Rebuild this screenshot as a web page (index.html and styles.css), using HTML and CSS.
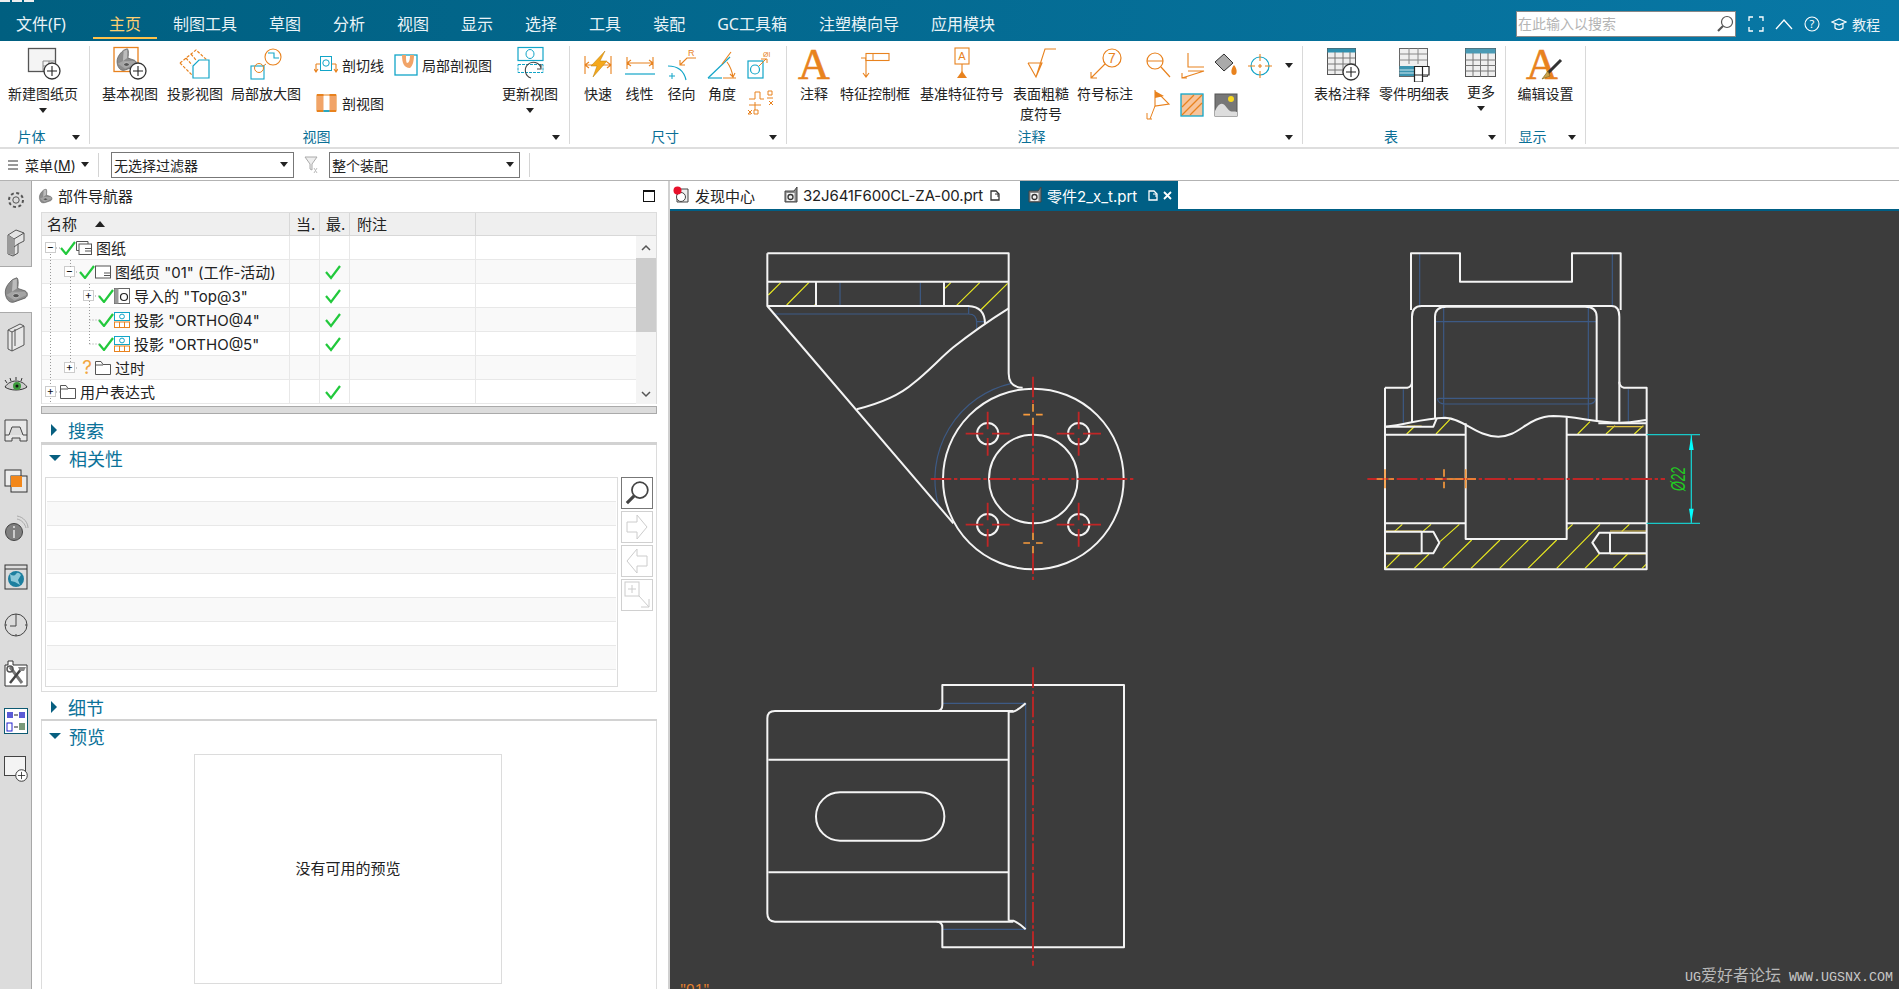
FILE: index.html
```html
<!DOCTYPE html>
<html lang="en">
<head>
	<meta charset="UTF-8">
	<title>NX 制图</title>
	<link rel="stylesheet" href="styles.css">
</head>
<body>
	<svg class="defs">
		<symbol id="i-plus" viewBox="0 0 18 18"><circle cx="9" cy="9" r="8" fill="#fff" stroke="#333" stroke-width="1.3"/><path d="M4 9H14M9 4V14" stroke="#222" stroke-width="1.1"/></symbol>
		<symbol id="i-part" viewBox="0 0 32 32"><path d="M3 21C2 14 6 8 12 3L17 1C19 2 19 8 18 14L27 17C31 19 31 24 27 26L13 31C8 32 4 28 3 21Z" fill="#8c8c8c" stroke="#5a5a5a"/><path d="M12 4L17 2 17 14 11 18Z" fill="#bcbcbc"/><path d="M4 22L11 18 27 18 29 22 14 29Z" fill="#a4a4a4"/><ellipse cx="16" cy="23" rx="4" ry="2.600" fill="#555" stroke="#ccc"/></symbol>
		<symbol id="i-check" viewBox="0 0 16 14"><path d="M1 7L6 13 15 1" fill="none" stroke="#22c93c" stroke-width="2.2"/></symbol>
		<symbol id="i-proj" viewBox="0 0 16 16"><rect x=".5" y=".5" width="15" height="8" fill="#fff" stroke="#12a5c8"/><circle cx="8" cy="4.5" r="2.4" fill="none" stroke="#12a5c8"/><rect x=".5" y="10" width="15" height="5.5" fill="#fff" stroke="#e8821e"/><path d="M5.5 10V15.5M10.5 10V15.5" stroke="#e8821e"/></symbol>
		<symbol id="i-folder" viewBox="0 0 16 16"><path d="M.5 14.5V1.5H6L8 4.500H15.500V14.500Z" fill="#fff" stroke="#555"/><path d="M.5 5H8" stroke="#555"/></symbol>
		<symbol id="i-doc" viewBox="0 0 16 18"><path d="M2 5H11L14 1V16H2Z" fill="#8a8a8a" stroke="#444"/><rect x="3.500" y="7" width="8" height="8" fill="#f2f2f2"/><circle cx="7.500" cy="11" r="2.500" fill="none" stroke="#333" stroke-width="1.300"/></symbol>
		<symbol id="i-lens" viewBox="0 0 18 18"><circle cx="11" cy="7" r="5.500" fill="none" stroke="currentColor" stroke-width="1.200"/><path d="M7 11L2 16" stroke="currentColor" stroke-width="2.200"/></symbol>
		<symbol id="i-detach" viewBox="0 0 10 12"><path d="M1 2H6L9 5V11H1Z" fill="none" stroke="currentColor" stroke-width="1.300"/><path d="M5 5H8V8" fill="none" stroke="currentColor"/></symbol>
	</svg>

	<header class="titlebar">
		<nav class="tabs">
			<span class="file-tab">文件(F)</span>
			<span class="tab active">主页</span>
			<span class="tab">制图工具</span>
			<span class="tab">草图</span>
			<span class="tab">分析</span>
			<span class="tab">视图</span>
			<span class="tab">显示</span>
			<span class="tab">选择</span>
			<span class="tab">工具</span>
			<span class="tab">装配</span>
			<span class="tab">GC工具箱</span>
			<span class="tab">注塑模向导</span>
			<span class="tab">应用模块</span>
		</nav>
		<div class="title-right">
			<div class="search"><span>在此输入以搜索</span><svg width="18" height="18" class="search-lens"><use href="#i-lens"/></svg></div>
			<svg class="tr-ico" width="16" height="16" viewBox="0 0 16 16"><path d="M1 5V1H5M11 1H15V5M15 11V15H11M5 15H1V11" fill="none" stroke="#fff" stroke-width="1.300"/></svg>
			<svg class="tr-ico" width="18" height="16" viewBox="0 0 18 16"><path d="M1 13L9 4 17 13" fill="none" stroke="#fff" stroke-width="1.300"/></svg>
			<svg class="tr-ico" width="16" height="16" viewBox="0 0 16 16"><circle cx="8" cy="8" r="7" fill="none" stroke="#fff" stroke-width="1.100"/><text x="8" y="12" font-size="11" text-anchor="middle" fill="#fff">?</text></svg>
			<svg class="tr-ico" width="16" height="14" viewBox="0 0 16 14"><path d="M1 5L8 2 15 5 8 8ZM4 7V11C6 13 10 13 12 11V7" fill="none" stroke="#fff" stroke-width="1.200"/></svg>
			<span class="tutorial">教程</span>
		</div>
	</header>

	<section class="ribbon">
		<div class="group g-sheet">
			<div class="group-body">
				<div class="btn">
					<svg class="ico" width="36" height="36" viewBox="0 0 36 36"><rect x="3.500" y="2.500" width="27" height="23" fill="#f4f4f4" stroke="#555" stroke-width="1.300"/><path d="M18 15H30M18 20H30M18 15V25M24 15V25" stroke="#888"/><use href="#i-plus" x="18" y="16" width="18" height="18"/></svg>
					<span>新建图纸页</span><i class="caret"></i>
				</div>
			</div>
			<div class="group-foot"><span>片体</span><i class="caret"></i></div>
		</div>

		<div class="group g-view">
			<div class="group-body">
				<div class="btn">
					<svg class="ico" width="36" height="36" viewBox="0 0 36 36"><rect x="2" y="1.500" width="24" height="24" fill="#fff" stroke="#e8821e" stroke-width="1.300"/><use href="#i-part" x="3" y="2" width="23" height="23"/><use href="#i-plus" x="17" y="16" width="18" height="18"/></svg>
					<span>基本视图</span>
				</div>
				<div class="btn">
					<svg class="ico" width="32" height="32" viewBox="0 0 32 32"><path d="M1 15L17 2 29 13M1 15L14 28M7 10L13 17M12 6L17 12" fill="none" stroke="#e8821e" stroke-width="1.200" stroke-dasharray="3 1.500"/><path d="M14 30V18L20 12H30V30Z" fill="#fff" stroke="#12a5c8" stroke-width="1.200"/></svg>
					<span>投影视图</span>
				</div>
				<div class="btn">
					<svg class="ico" width="32" height="32" viewBox="0 0 32 32"><circle cx="23" cy="9" r="8" fill="#fff" stroke="#e8821e" stroke-width="1.100"/><path d="M18 5H24V10H29" fill="none" stroke="#12a5c8" stroke-width="1.100"/><path d="M16 16L12 19" stroke="#e8821e"/><rect x="1" y="18" width="13" height="13" fill="#fff" stroke="#12a5c8" stroke-width="1.100"/><circle cx="9" cy="20" r="4.500" fill="none" stroke="#e8821e"/></svg>
					<span>局部放大图</span>
				</div>
				<div class="tools">
					<div class="tool-row">
						<div class="tool">
							<svg width="24" height="20" viewBox="0 0 24 20"><path d="M2 9V16M22 9V16M2 9H6M18 9H22M0 14L2 17 4 14M20 14L22 17 24 14" fill="none" stroke="#e8821e" stroke-width="1.100"/><rect x="6.500" y="1.500" width="11" height="14" fill="#fff" stroke="#12a5c8"/><circle cx="12" cy="8" r="3.200" fill="none" stroke="#12a5c8"/></svg>
							<span>剖切线</span>
						</div>
						<div class="tool tool-right">
							<svg width="24" height="22" viewBox="0 0 24 22"><rect x="1" y="1" width="22" height="20" fill="#fff" stroke="#12a5c8" stroke-width="1.300"/><path d="M8 1C8 9 10 14 16 14C19 12 20 6 20 1H16C16 6 15 9 13 9C12 8 12 4 12 1Z" fill="#f1a468"/></svg>
							<span>局部剖视图</span>
						</div>
					</div>
					<div class="tool-row">
						<div class="tool">
							<svg width="24" height="20" viewBox="0 0 24 20"><rect x="3" y="2" width="19" height="16" fill="#fff" stroke="#e8821e"/><rect x="3" y="2" width="6.500" height="16" fill="#f1a468"/><rect x="15.500" y="2" width="6.500" height="16" fill="#f1a468"/><path d="M3 2H9.500M15.500 2H22M3 18H9.500M15.500 18H22" stroke="#e8821e" stroke-width="1.800"/><path d="M9.500 18H15.500" stroke="#12a5c8" stroke-width="1.800"/></svg>
							<span>剖视图</span>
						</div>
					</div>
				</div>
				<div class="btn">
					<svg class="ico" width="32" height="36" viewBox="0 0 32 36"><rect x="4" y="1.500" width="25" height="13" fill="#fff" stroke="#12a5c8" stroke-width="1.200"/><ellipse cx="16" cy="8" rx="4" ry="4.500" fill="none" stroke="#12a5c8"/><rect x="4" y="18.500" width="25" height="8" fill="#fff" stroke="#12a5c8" stroke-dasharray="3 1"/><path d="M17 32A8 8 0 1 1 27 22M27 18V23H23" fill="none" stroke="#444" stroke-width="1.100"/></svg>
					<span>更新视图</span><i class="caret"></i>
				</div>
			</div>
			<div class="group-foot"><span>视图</span><i class="caret"></i></div>
		</div>

		<div class="group g-dim">
			<div class="group-body">
				<div class="btn">
					<svg class="ico" width="30" height="32" viewBox="0 0 30 32"><path d="M2 8V26M28 8V26M2 17H28M6 14L2 17 6 20M24 14L28 17 24 20" fill="none" stroke="#e8821e" stroke-width="1.100"/><path d="M22 3L8 18H14L10 29 24 13H17Z" fill="#f5a81c" stroke="#b87a00" stroke-width=".5"/></svg>
					<span>快速</span>
				</div>
				<div class="btn">
					<svg class="ico" width="32" height="32" viewBox="0 0 32 32"><path d="M3 9V21M29 9V21M3 15H29M7 12L3 15 7 18M25 12L29 15 25 18" fill="none" stroke="#e8821e" stroke-width="1.100"/><path d="M1 26H31" stroke="#12a5c8" stroke-width="1.200"/></svg>
					<span>线性</span>
				</div>
				<div class="btn">
					<svg class="ico" width="30" height="32" viewBox="0 0 30 32"><path d="M1 18C11 18 17 23 19 32" fill="none" stroke="#12a5c8" stroke-width="1.200"/><path d="M5 25V31M2 28H8" stroke="#12a5c8"/><path d="M29 10H20L13 17M13 12V17H18" fill="none" stroke="#e8821e" stroke-width="1.100"/><text x="21" y="8" font-size="9" fill="#e8821e" class="svg-font">R</text></svg>
					<span>径向</span>
				</div>
				<div class="btn">
					<svg class="ico" width="32" height="32" viewBox="0 0 32 32"><path d="M2 30L24 9" fill="none" stroke="#12a5c8" stroke-width="1.200"/><path d="M2 30H16" stroke="#12a5c8" stroke-width="1.200"/><path d="M17 30H30M16 16L25 4M21 14C24 18 26 23 27 29M24 26L27 29 29 25" fill="none" stroke="#e8821e" stroke-width="1.100"/></svg>
					<span>角度</span>
				</div>
				<div class="stack">
					<svg width="28" height="32" viewBox="0 0 28 32"><rect x="2" y="11" width="15" height="17" fill="#fff" stroke="#12a5c8" stroke-width="1.200"/><circle cx="9" cy="19.500" r="4.500" fill="none" stroke="#12a5c8" stroke-width="1.200"/><path d="M13 16L20 9M15 9H21V13" fill="none" stroke="#e8821e"/><text x="17" y="7" font-size="7" fill="#e8821e" class="svg-font">ØI</text></svg>
					<svg width="28" height="28" viewBox="0 0 28 28"><path d="M3 12H9V5H14V12H18M9 15V23M3 18H15M22 4H26V8H22ZM21 11H27M23 14L27 18M27 14L23 18M2 27H5M8 23H12V27H8ZM2 23L6 27M6 23L2 27" fill="none" stroke="#e8821e"/></svg>
				</div>
			</div>
			<div class="group-foot"><span>尺寸</span><i class="caret"></i></div>
		</div>

		<div class="group g-note">
			<div class="group-body">
				<div class="btn">
					<svg class="ico ico-open" width="34" height="34" viewBox="0 0 34 34"><text x="17" y="32" font-size="44" text-anchor="middle" fill="#e8821e" class="svg-serif">A</text></svg>
					<span>注释</span>
				</div>
				<div class="btn">
					<svg class="ico" width="30" height="34" viewBox="0 0 30 34"><path d="M1 11H6V30M3 26L6 30 9 26" fill="none" stroke="#e8821e" stroke-width="1.100"/><rect x="6" y="6.500" width="23" height="7" fill="#fff" stroke="#e8821e" stroke-width="1.100"/><path d="M13 6.500V13.500" stroke="#e8821e"/></svg>
					<span>特征控制框</span>
				</div>
				<div class="btn">
					<svg class="ico" width="22" height="34" viewBox="0 0 22 34"><rect x="4" y="1" width="14" height="16" fill="#fff" stroke="#e8821e" stroke-width="1.100"/><text x="11" y="13" font-size="11" text-anchor="middle" fill="#e8821e" class="svg-font">A</text><path d="M11 17V26" stroke="#e8821e" stroke-width="1.100"/><path d="M6 31L11 24 16 31Z" fill="#e8821e"/></svg>
					<span>基准特征符号</span>
				</div>
				<div class="btn">
					<svg class="ico" width="32" height="34" viewBox="0 0 32 34"><path d="M3 16H17L11 30 3 16M11 30L20 2H31" fill="none" stroke="#e8821e" stroke-width="1.100"/></svg>
					<span>表面粗糙<br>度符号</span>
				</div>
				<div class="btn">
					<svg class="ico" width="34" height="34" viewBox="0 0 34 34"><circle cx="24" cy="11" r="9" fill="#fff" stroke="#e8821e" stroke-width="1.200"/><text x="24" y="16" font-size="14" text-anchor="middle" fill="#e8821e" class="svg-font">7</text><path d="M17 17L3 31M3 25V31H9" fill="none" stroke="#e8821e" stroke-width="1.100"/></svg>
					<span>符号标注</span>
				</div>
				<div class="mini-grid">
					<svg width="26" height="30" viewBox="0 0 26 30"><circle cx="10" cy="10" r="8" fill="none" stroke="#e8821e" stroke-width="1.200"/><path d="M2 10H18M16 16L25 26" stroke="#e8821e" stroke-width="1.200"/></svg>
					<svg width="26" height="30" viewBox="0 0 26 30"><path d="M9 2V16H25M9 20H25L3 27M3 22V27H8" fill="none" stroke="#e8821e" stroke-width="1.100"/></svg>
					<svg width="26" height="30" viewBox="0 0 26 30"><path d="M2 11L11 3 20 12 11 20Z" fill="#aaa" stroke="#333"/><path d="M21 14C25 19 24 24 21 24S17 19 21 14Z" fill="#e8821e"/></svg>
					<svg width="26" height="30" viewBox="0 0 26 30"><circle cx="13" cy="15" r="9" fill="none" stroke="#12a5c8" stroke-width="1.200"/><path d="M13 3V10M13 20V27M1 15H8M18 15H25M11 15H15M13 13V17" stroke="#e8821e" stroke-width="1.100"/></svg>
					<svg width="26" height="32" viewBox="0 0 26 32"><path d="M10 1V17L24 15 16 7 10 7" fill="#fff" stroke="#e8821e" stroke-width="1.100"/><path d="M10 2L19 7 10 9Z" fill="#e8821e"/><path d="M10 17L5 30M2 24V30H7" fill="none" stroke="#e8821e"/></svg>
					<svg width="26" height="26" viewBox="0 0 26 26"><rect x="2" y="2" width="22" height="22" fill="#f7c49b" stroke="#12a5c8" stroke-width="1.300"/><path d="M3 15L15 3M3 23L23 3M11 23L23 11" stroke="#e8821e" stroke-width="1.300"/></svg>
					<svg width="26" height="26" viewBox="0 0 26 26"><rect x="2" y="2" width="22" height="22" fill="#777" stroke="#555"/><path d="M2 19C6 10 10 10 14 16S22 18 24 20V24H2Z" fill="#ddd"/><circle cx="18" cy="7" r="3" fill="#f8d820"/></svg>
					<i></i>
				</div>
				<i class="caret mini-caret"></i>
			</div>
			<div class="group-foot"><span>注释</span><i class="caret"></i></div>
		</div>

		<div class="group g-table">
			<div class="group-body">
				<div class="btn">
					<svg class="ico" width="36" height="36" viewBox="0 0 36 36"><rect x="3.500" y="2.500" width="28" height="26" fill="#efefef" stroke="#555"/><rect x="3.500" y="2.500" width="28" height="4" fill="#2e8fae"/><path d="M3.500 12H31M3.500 18H31M3.500 24H31M11 6V28M19 6V28M26 6V28" stroke="#777"/><use href="#i-plus" x="18" y="17" width="18" height="18"/></svg>
					<span>表格注释</span>
				</div>
				<div class="btn">
					<svg class="ico" width="36" height="36" viewBox="0 0 36 36"><rect x="3.500" y="2.500" width="28" height="28" fill="#efefef" stroke="#666"/><path d="M3.500 8H31M3.500 14H31M13 2V18M22 2V18" stroke="#888"/><rect x="3.500" y="20" width="15" height="10" fill="#3b94b0"/><path d="M3.500 24H18M3.500 27H18" stroke="#cfe7ee"/><path d="M18.500 20.500H33V29H26.500V36H18.500ZM26.500 20.500V29H18.500" fill="#fff" stroke="#222" stroke-width="1.200"/></svg>
					<span>零件明细表</span>
				</div>
				<div class="btn">
					<svg class="ico" width="32" height="34" viewBox="0 0 32 34"><rect x=".5" y="1.500" width="30" height="28" fill="#efefef" stroke="#555"/><rect x=".5" y="1.500" width="30" height="5" fill="#4a9ab4"/><path d="M.5 13H31M.5 18.500H31M.5 24H31M8 6V30M15.500 6V30M23 6V30" stroke="#777"/></svg>
					<span class="label-up">更多</span><i class="caret"></i>
				</div>
			</div>
			<div class="group-foot"><span>表</span><i class="caret"></i></div>
		</div>

		<div class="group g-show">
			<div class="group-body">
				<div class="btn">
					<svg class="ico ico-open" width="36" height="36" viewBox="0 0 36 36"><text x="14" y="33" font-size="44" text-anchor="middle" fill="#e8821e" class="svg-serif">A</text><path d="M33 14L20 27" stroke="#333" stroke-width="3"/><path d="M20 25L14 33 22 30Z" fill="#c9a24a" stroke="#7a5b12" stroke-width=".6"/></svg>
					<span>编辑设置</span>
				</div>
			</div>
			<div class="group-foot"><span>显示</span><i class="caret"></i></div>
		</div>
	</section>

	<section class="toolbar">
		<svg class="burger" width="10" height="10" viewBox="0 0 10 10"><path d="M0 1H10M0 5H10M0 9H10" stroke="#333"/></svg>
		<span class="menu-btn">菜单(<u>M</u>)</span><i class="caret"></i>
		<i class="tb-sep"></i>
		<div class="select select-a"><span>无选择过滤器</span><i class="caret"></i></div>
		<svg class="funnel" width="18" height="20" viewBox="0 0 18 20"><path d="M2 2H14L9 9V15L7 14V9Z" fill="#eee" stroke="#aaa"/><path d="M11 13L14 18M14 13L11 18" stroke="#bbb"/></svg>
		<div class="select select-b"><span>整个装配</span><i class="caret"></i></div>
		<i class="tb-sep"></i>
	</section>

	<main class="main">
		<aside class="rail">
			<div class="rail-tab rail-first"><svg width="20" height="20" viewBox="0 0 20 20"><circle cx="10" cy="10" r="3.200" fill="none" stroke="#555"/><circle cx="10" cy="10" r="7" fill="none" stroke="#555" stroke-width="2" stroke-dasharray="3 2.500"/></svg></div>
			<div class="rail-tab"><svg width="20" height="30" viewBox="0 0 20 30"><path d="M2 8L10 3 18 6V14L12 17V26L7 29 2 27Z" fill="#e4e4e4" stroke="#555"/><path d="M2 8L8 12V28M8 12L18 6M8 20L12 17" fill="none" stroke="#555"/><path d="M2 8L8 12V28L2 27Z" fill="#9a9a9a"/></svg></div>
			<div class="rail-tab rail-on"><svg width="26" height="28" viewBox="0 0 32 32"><use href="#i-part"/></svg></div>
			<div class="rail-tab"><svg width="20" height="30" viewBox="0 0 20 30"><path d="M2 8L14 2 18 4V23L6 29 2 27ZM2 8L6 10V29M6 10L18 4M9 7V24" fill="#e8e8e8" stroke="#555"/></svg></div>
			<div class="rail-tab"><svg width="24" height="16" viewBox="0 0 24 16"><path d="M1 10C6 2 18 2 23 10 18 14 6 14 1 10Z" fill="#ccc" stroke="#333"/><circle cx="13" cy="9" r="4" fill="#3b9a3b"/><circle cx="13" cy="9" r="1.500" fill="#111"/><path d="M3 6L1 3M7 4L6 1M12 3V0M17 4L18 1" stroke="#333"/></svg></div>
			<div class="rail-tab"><svg width="24" height="28" viewBox="0 0 24 28"><path d="M1 1H23V16H19L16 8H8L5 16H1ZM1 16V22H8V19H16V22H23V16" fill="#e8e8e8" stroke="#444"/></svg></div>
			<div class="rail-tab"><svg width="26" height="26" viewBox="0 0 26 26"><rect x="2" y="2" width="16" height="16" fill="#eee" stroke="#333"/><rect x="8" y="8" width="16" height="16" fill="#e8e8e8" stroke="#333"/><rect x="8" y="8" width="11" height="11" fill="#f2871a"/></svg></div>
			<div class="rail-tab"><svg width="26" height="30" viewBox="0 0 26 30"><circle cx="11" cy="18" r="8.500" fill="#808080" stroke="#444"/><path d="M11 12V14M11 16V24" stroke="#fff" stroke-width="1.200"/><path d="M14 5C19 6 22 10 23 14M14 2C21 3 25 9 25 14" fill="none" stroke="#aaa"/></svg></div>
			<div class="rail-tab"><svg width="26" height="28" viewBox="0 0 26 28"><rect x="2" y="2" width="22" height="24" fill="#ddd" stroke="#333"/><path d="M2 6H24" stroke="#333"/><circle cx="13" cy="16" r="8" fill="#1d7f9f"/><path d="M7 11Q11 14 13 11T18 12L15 17 17 22 12 19 8 18Z" fill="#8cc8d8"/></svg></div>
			<div class="rail-tab"><svg width="24" height="26" viewBox="0 0 24 26"><circle cx="12" cy="13" r="11" fill="none" stroke="#444"/><path d="M12 2V14H6M12 22V24M1 13H3M21 13H23" fill="none" stroke="#444"/></svg></div>
			<div class="rail-tab"><svg width="24" height="28" viewBox="0 0 24 28"><path d="M1 6H4V2H9V6H23V27H1Z" fill="#fff" stroke="#333"/><path d="M6 8L18 24" stroke="#777" stroke-width="3"/><path d="M18 9L6 24" stroke="#444" stroke-width="2.500"/><path d="M14 8H22L20 12H16Z" fill="#888"/><circle cx="6" cy="10" r="3" fill="none" stroke="#555" stroke-width="1.500"/></svg></div>
			<div class="rail-tab"><svg width="24" height="26" viewBox="0 0 24 26"><rect x=".5" y=".5" width="23" height="25" fill="#fff" stroke="#0d5a72"/><rect x="3" y="4" width="6" height="6" fill="#5b5bd6"/><rect x="15" y="4" width="6" height="6" fill="#5b5bd6"/><path d="M10 7H14M10 19H14" stroke="#222"/><rect x="3" y="15" width="5" height="8" fill="#fff" stroke="#2222cc"/><rect x="15" y="15" width="6" height="7" fill="#7a9a7a"/></svg></div>
			<div class="rail-tab"><svg width="24" height="26" viewBox="0 0 24 26"><rect x=".5" y=".5" width="21" height="19" fill="#f4f4f4" stroke="#444"/><use href="#i-plus" x="11" y="13" width="13" height="13"/></svg></div>
		</aside>

		<div class="panel">
			<div class="nav-title">
				<svg width="15" height="16" viewBox="0 0 32 32"><use href="#i-part"/></svg>
				<span>部件导航器</span>
				<i class="maximize"></i>
			</div>
			<div class="nav-table">
				<div class="thead">
					<span class="th th-name">名称<i class="sort"></i></span>
					<span class="th th-cur">当.</span>
					<span class="th th-cur">最.</span>
					<span class="th th-note">附注</span>
				</div>
				<div class="tbody">
					<div class="rows">
						<div class="tr">
							<div class="td-name l1"><i class="exp">−</i><svg class="chk" width="16" height="14"><use href="#i-check"/></svg><svg class="node" width="16" height="14" viewBox="0 0 16 14"><rect x="3" y="3" width="12.500" height="10.500" fill="#fff" stroke="#555"/><path d="M3 9.500H.5V.5H12V3M9 10H15M9 7.500H15" fill="none" stroke="#555"/></svg><span>图纸</span></div>
							<i class="td"></i><i class="td"></i><i class="td"></i>
						</div>
						<div class="tr">
							<div class="td-name l2"><i class="exp">−</i><svg class="chk" width="16" height="14"><use href="#i-check"/></svg><svg class="node" width="16" height="14" viewBox="0 0 16 14"><rect x=".5" y="1" width="15" height="12" fill="#fff" stroke="#555"/><path d="M9 10.500H15M9 8H15" stroke="#555"/></svg><span>图纸页 "01" (工作-活动)</span></div>
							<i class="td"></i><i class="td td-ok"><svg width="16" height="16"><use href="#i-check"/></svg></i><i class="td"></i>
						</div>
						<div class="tr">
							<div class="td-name l3"><i class="exp">+</i><svg class="chk" width="16" height="14"><use href="#i-check"/></svg><svg class="node" width="16" height="16" viewBox="0 0 16 16"><rect x=".5" y=".5" width="15" height="15" fill="#fff" stroke="#666"/><rect x=".5" y=".5" width="4" height="15" fill="#999"/><circle cx="10" cy="9" r="3.500" fill="none" stroke="#222" stroke-width="1.200"/></svg><span>导入的 "Top@3"</span></div>
							<i class="td"></i><i class="td td-ok"><svg width="16" height="16"><use href="#i-check"/></svg></i><i class="td"></i>
						</div>
						<div class="tr">
							<div class="td-name l3"><i class="exp exp-none"></i><svg class="chk" width="16" height="14"><use href="#i-check"/></svg><svg class="node" width="16" height="16"><use href="#i-proj"/></svg><span>投影 "ORTHO@4"</span></div>
							<i class="td"></i><i class="td td-ok"><svg width="16" height="16"><use href="#i-check"/></svg></i><i class="td"></i>
						</div>
						<div class="tr">
							<div class="td-name l3"><i class="exp exp-none"></i><svg class="chk" width="16" height="14"><use href="#i-check"/></svg><svg class="node" width="16" height="16"><use href="#i-proj"/></svg><span>投影 "ORTHO@5"</span></div>
							<i class="td"></i><i class="td td-ok"><svg width="16" height="16"><use href="#i-check"/></svg></i><i class="td"></i>
						</div>
						<div class="tr">
							<div class="td-name l2"><i class="exp">+</i><span class="qmark">?</span><svg class="node" width="16" height="16"><use href="#i-folder"/></svg><span>过时</span></div>
							<i class="td"></i><i class="td"></i><i class="td"></i>
						</div>
						<div class="tr">
							<div class="td-name l1"><i class="exp">+</i><svg class="node" width="16" height="16"><use href="#i-folder"/></svg><span>用户表达式</span></div>
							<i class="td"></i><i class="td td-ok"><svg width="16" height="16"><use href="#i-check"/></svg></i><i class="td"></i>
						</div>
						<svg class="tree-lines" width="100" height="168"><path d="M8.500 18V150M8.500 162V168M14 12H18M28.500 24V31M28.500 41V127M34 36H37M34 132H37M47.500 48V55M47.500 65V108M47.500 84H58M47.500 108H58M53 60H58M14 156H18" fill="none" stroke="#999" stroke-dasharray="1 2"/></svg>
					</div>
					<div class="vscroll">
						<svg width="12" height="10" viewBox="0 0 12 10"><path d="M2 7L6 3 10 7" fill="none" stroke="#555" stroke-width="1.500"/></svg>
						<i class="thumb"></i>
						<svg class="scroll-down" width="12" height="10" viewBox="0 0 12 10"><path d="M2 3L6 7 10 3" fill="none" stroke="#555" stroke-width="1.500"/></svg>
					</div>
				</div>
			</div>
			<div class="hscroll"></div>

			<div class="sec-head sec-search"><i class="tri-r"></i><span>搜索</span></div>
			<div class="sec-bar"></div>
			<div class="sec-box sec-rel">
				<div class="sec-head sec-rel-head"><i class="tri-d"></i><span>相关性</span></div>
				<div class="rel-body">
					<div class="rel-list">
						<i></i><i></i><i></i><i></i><i></i><i></i><i></i><i></i><i></i>
					</div>
					<div class="rel-btns">
						<div class="rel-btn rel-btn-on"><svg width="26" height="26" viewBox="0 0 18 18" color="#444"><use href="#i-lens"/></svg></div>
						<div class="rel-btn"><svg width="22" height="26" viewBox="0 0 22 26"><path d="M1 8H11V1L21 13 11 25V18H1Z" fill="#fff" stroke="#ccc"/></svg></div>
						<div class="rel-btn"><svg width="22" height="26" viewBox="0 0 22 26"><path d="M21 8H11V1L1 13 11 25V18H21Z" fill="#fff" stroke="#ccc"/></svg></div>
						<div class="rel-btn"><svg width="26" height="28" viewBox="0 0 26 28"><rect x="1" y="1" width="14" height="14" fill="#fff" stroke="#ccc"/><path d="M8 4V12M4 8H12M15 15L25 26M25 18V26H17" fill="none" stroke="#ccc"/></svg></div>
					</div>
				</div>
			</div>
			<div class="sec-head sec-detail"><i class="tri-r"></i><span>细节</span></div>
			<div class="sec-bar sec-bar-thin"></div>
			<div class="sec-box sec-preview">
				<div class="sec-head sec-preview-head"><i class="tri-d"></i><span>预览</span></div>
				<div class="preview-box">没有可用的预览</div>
			</div>
		</div>
		<div class="splitter"></div>

		<div class="workspace">
			<div class="doc-tabs">
				<div class="doc-tab dt-find">
					<svg width="16" height="18" viewBox="0 0 16 18"><path d="M4 3H15V16H4Z" fill="#eee" stroke="#444"/><circle cx="8" cy="11" r="4.500" fill="#fff" stroke="#444"/><circle cx="4.500" cy="4.500" r="4" fill="#e8102a"/></svg>
					<span>发现中心</span>
				</div>
				<div class="doc-tab dt-file">
					<svg width="16" height="18"><use href="#i-doc"/></svg>
					<span>32J641F600CL-ZA-00.prt</span>
					<svg class="dt-detach" width="10" height="12"><use href="#i-detach"/></svg>
				</div>
				<div class="doc-tab dt-active">
					<svg width="16" height="18"><use href="#i-doc"/></svg>
					<span>零件2_x_t.prt</span>
					<svg class="dt-detach" width="10" height="12"><use href="#i-detach"/></svg>
					<svg class="dt-close" width="9" height="9" viewBox="0 0 9 9"><path d="M1 1L8 8M8 1L1 8" stroke="#fff" stroke-width="1.800"/></svg>
				</div>
			</div>
			<svg class="sheet" width="1229" height="778" viewBox="670 211 1229 778">
				<!-- 视图1 -->
				<g transform="translate(740 230) scale(.33333)" fill="none">
					<g class="hid">
						<path d="M300 157V225M541 157V225M686 230V252M105 252H686Q710 252 710 278V297M710 275H735"/>
						<path d="M815 460A295 295 0 0 0 595 825"/>
					</g>
					<g class="hatch">
						<path d="M85 195L123 157M140 225L207 157M222 228L228 222M615 175L633 157M650 226L720 157M722 240L803 160"/>
					</g>
					<g class="obj">
						<path d="M82 70H806V430Q806 473 848 473M82 70V228L640 880M82 155H806M82 228H685Q735 230 735 282M228 155V228M612 155V228"/>
						<path d="M350 538C430 518 480 495 520 460C570 420 600 385 640 352C690 312 750 270 806 235"/>
						<circle cx="880" cy="747" r="271"/>
						<circle cx="880" cy="747" r="133"/>
						<circle cx="743" cy="611" r="32"/><circle cx="1016" cy="611" r="32"/>
						<circle cx="743" cy="884" r="32"/><circle cx="1016" cy="884" r="32"/>
					</g>
					<g class="center">
						<path class="dash" d="M572 747H1187"/>
						<path class="dash" d="M879 440V522M879 585V908M879 970V1055"/>
						<path d="M677 611H730M756 611H809M743 545V598M743 624V677M950 611H1003M1029 611H1083M1016 545V598M1016 624V677M677 884H730M756 884H809M743 818V871M743 897V950M950 884H1003M1029 884H1083M1016 818V871M1016 897V950"/>
					</g>
					<path class="mark" d="M850 554H870M888 554H908M879 522V545M879 563V585M850 939H870M888 939H908M879 908V930M879 948V970"/>
				</g>

				<!-- 视图2 -->
				<g transform="translate(1350 230) scale(.33333)" fill="none">
					<g class="hid">
						<path d="M209 70V228M787 70V228M281 228V565M715 228V570M258 275H740M160 478V578M835 478V578M265 505H735M262 505Q265 522 285 522H715Q735 522 737 505"/>
					</g>
					<g class="hatch">
						<path d="M107 1015L150 972M193 1015L237 972M278 1015L365 930M363 1015L450 930M449 1015L535 930M534 1015L620 930M620 1015L750 883M705 1015L748 972M790 1015L833 972M876 1015L888 1003M270 935L328 883M650 900L668 883M133 905L157 883M218 905L243 883M815 905L838 883M170 612L195 588M258 612L300 568M683 612L720 575M768 612L795 587M853 612L880 587"/>
						<path class="hatch-soft" d="M107 903H215M107 972H215M780 903H888M780 972H888M170 588H215M770 590H880"/>
					</g>
					<g class="obj">
						<path d="M183 240V70H330V155H666V70H812V240M105 473H172Q186 470 186 455V260Q186 228 215 228H785Q808 228 808 260V455Q808 470 822 473H890V1018H105V473"/>
						<path d="M186 455V578M808 455V575"/>
						<path d="M255 565V260Q255 230 290 230H705Q740 230 740 260V572"/>
						<path d="M107 590C170 585 210 565 285 563C340 565 380 620 445 620C510 620 530 560 610 558C680 558 730 578 810 578C850 578 870 572 888 570"/>
						<path d="M107 590H250L260 566M745 580H888"/>
						<path d="M105 614H347M650 614H890M105 880H347M650 880H890M347 580V927H650V562"/>
						<path d="M107 905H250L268 938 250 970H107M215 905V970M888 908H778L748 908 727 938 748 970H888M780 908V970"/>
					</g>
					<path class="center dash" d="M52 747H945"/>
					<path class="mark" d="M80 747H98M115 747H132M255 747H278M290 747H340M352 747H378M105 718V775M282 718V740M282 755V775M347 718V775"/>
					<g class="dim">
						<path d="M890 614H1050M890 880H1050M1024 614V880"/>
						<path class="dim-arrow" d="M1024 616L1031 660H1017ZM1024 878L1031 836H1017Z"/>
					</g>
					<text class="dim-text" transform="translate(1005 747) rotate(-90) scale(.63 1)" text-anchor="middle" font-size="60">Ø22</text>
				</g>

				<!-- 视图3 -->
				<g transform="translate(740 650) scale(.33333)" fill="none">
					<path class="hid" d="M607 160H857V838H607"/>
					<g class="obj">
						<path d="M607 165V105H1152V892H607V832Q607 815 590 815H105Q82 815 82 790V205Q82 183 105 183H590Q607 183 607 165"/>
						<path d="M806 185V812M85 329H806M85 667H806"/>
						<path d="M806 185H820Q835 180 857 160M806 812H820Q835 818 857 838M590 183H820M590 815H820"/>
						<rect x="228" y="427" width="385" height="145" rx="72"/>
					</g>
					<path class="center dash" d="M879 52V947"/>
				</g>

				<text x="680" y="994" class="sheet-name">"01"</text>
				<text x="1685" y="981" class="watermark">UG<tspan class="wm-cn">爱好者论坛</tspan> WWW.UGSNX.COM</text>
			</svg>
		</div>
	</main>
</body>
</html>
```

FILE: styles.css
```css
* {
	box-sizing: border-box;
}
html, body {
	margin: 0;
	height: 100%;
	overflow: hidden;
}
body {
	font-family: "Noto Sans", "Noto Sans CJK SC", sans-serif;
	font-size: 14px;
	color: #222;
	background: #fff;
}
i {
	font-style: normal;
}
.defs {
	display: none;
}
.svg-font {
	font-family: "Liberation Sans", sans-serif;
}
.svg-serif {
	font-family: "Liberation Serif", serif;
	stroke: #e8821e;
	stroke-width: .6;
}
.caret {
	display: inline-block;
	width: 0;
	height: 0;
	border-left: 4px solid transparent;
	border-right: 4px solid transparent;
	border-top: 5px solid #222;
}

/* 标题栏 */
.titlebar {
	height: 41px;
	display: flex;
	align-items: center;
	padding-top: 7px;
	background: repeating-linear-gradient(90deg, #eee 0 10px, transparent 10px 12px) 0 0 / 36px 2px no-repeat, linear-gradient(to right, #005f80, #0878a6);
	color: #e9f3f7;
}
.tabs {
	display: flex;
	font-size: 16px;
	height: 34px;
	line-height: 32px;
}
.file-tab {
	width: 93px;
	padding: 1px 0 0 16px;
}
.tab {
	padding: 1px 16px 0;
	border-bottom: 2px solid transparent;
	height: 32px;
}
.tab.active {
	color: #ffd070;
	border-bottom-color: #ffc24a;
}
.title-right {
	margin-left: auto;
	display: flex;
	align-items: center;
	padding-right: 19px;
	margin-top: -7px;
	position: relative;
	top: 3px;
}
.search {
	width: 220px;
	height: 26px;
	background: #fff;
	border: 1px solid #888;
	color: #b4b4b4;
	font-size: 14px;
	line-height: 24px;
	padding-left: 1px;
	display: flex;
	justify-content: space-between;
	align-items: center;
	margin-right: 12px;
}
.search-lens {
	color: #555;
	margin-right: 1px;
}
.tr-ico {
	margin-right: 11px;
}
.tutorial {
	font-size: 14px;
	margin-left: -6px;
}

/* 功能区 */
.ribbon {
	height: 108px;
	display: flex;
	padding-top: 5px;
	border-bottom: 2px solid #dedede;
	background: #fff;
}
.group {
	height: 98px;
	border-right: 1px solid #d9d9d9;
	display: flex;
	flex-direction: column;
	flex: none;
}
.group-body {
	height: 84px;
	flex: none;
	display: grid;
	grid-auto-flow: column;
	justify-content: start;
}
.group-foot {
	height: 14px;
	line-height: 20px;
	display: flex;
	align-items: center;
	color: #0a6f96;
}
.group-foot span {
	flex: 1;
	text-align: center;
}
.group-foot .caret {
	margin: 0 9px;
	flex: none;
}
.g-sheet { width: 90px; }
.g-sheet .group-body { grid-template-columns: 86px; }
.g-view { width: 480px; }
.g-view .group-body {
	grid-template-columns: 64px 66px 76px 191px 70px;
	padding-left: 8px;
}
.g-dim { width: 217px; }
.g-dim .group-body {
	grid-template-columns: 40px 43px 41px 40px 36px;
	padding-left: 8px;
}
.g-note { width: 516px; }
.g-note .group-body {
	grid-template-columns: 50px 72px 102px 56px 72px 136px 20px;
	padding-left: 2px;
}
.g-table { width: 203px; }
.g-table .group-body {
	grid-template-columns: 72px 72px 56px;
	padding-left: 3px;
}
.g-table .btn:last-child {
	padding-left: 6px;
}
.g-show { width: 80px; }
.g-show .group-body { grid-template-columns: 79px; }

.btn {
	display: flex;
	flex-direction: column;
	align-items: center;
	text-align: center;
	line-height: 20px;
	white-space: nowrap;
}
.btn .ico {
	height: 36px;
	margin-bottom: 2px;
	flex: none;
}
.btn .ico-open {
	overflow: visible;
}
.btn .caret {
	margin-top: 4px;
}
.label-up {
	margin-top: -2px;
}
.tool-row {
	height: 38px;
	display: flex;
	padding-left: 10px;
}
.tool {
	display: flex;
	align-items: center;
	gap: 4px;
	white-space: nowrap;
}
.tool-right {
	margin-left: 10px;
}
.stack {
	display: flex;
	flex-direction: column;
	align-items: center;
	padding-top: 4px;
	gap: 5px;
}
.mini-grid {
	display: grid;
	grid-template-columns: repeat(4, 34px);
	grid-template-rows: 39px 39px;
	justify-items: center;
	align-items: center;
}
.mini-caret {
	margin: 17px 0 0 8px;
}

/* 选择条 */
.toolbar {
	height: 32px;
	display: flex;
	align-items: center;
	border-bottom: 1px solid #b3b3b3;
	background: #fff;
}
.burger {
	margin-left: 8px;
}
.menu-btn {
	margin-left: 7px;
	width: 56px;
	font-family: Inter, "Noto Sans CJK SC", sans-serif;
}
.tb-sep {
	width: 1px;
	height: 24px;
	background: #d4d4d4;
	margin: 0 12px 0 9px;
}
.select {
	height: 26px;
	border: 1px solid #777;
	display: flex;
	justify-content: space-between;
	align-items: center;
	padding: 0 5px 0 2px;
}
.select-a { width: 183px; }
.select-b { width: 191px; }
.funnel {
	margin: 0 8px 0 9px;
}

/* 主区 */
.main {
	height: 808px;
	display: flex;
}
.rail {
	width: 32px;
	flex: none;
	background: #dcdcdc;
	border-right: 1px solid #a8a8a8;
}
.rail-tab {
	height: 48px;
	display: flex;
	align-items: center;
	justify-content: center;
}
.rail-first {
	height: 37px;
}
.rail-on {
	height: 47px;
	background: #fff;
	border-top: 1px solid #aaa;
	border-bottom: 1px solid #aaa;
	margin-right: -1px;
}

.panel {
	width: 636px;
	flex: none;
	padding: 0 11px 0 9px;
	overflow: hidden;
}
.nav-title {
	height: 31px;
	display: flex;
	align-items: center;
	font-size: 15px;
	padding-bottom: 2px;
	margin-left: -3px;
	gap: 5px;
}
.maximize {
	margin-left: auto;
	margin-right: 2px;
	width: 12px;
	height: 12px;
	border: 1px solid #111;
	border-top-width: 2px;
}
.nav-table {
	border: 1px solid #dcdcdc;
	border-bottom: none;
	height: 192px;
	font-family: Inter, "Noto Sans CJK SC", sans-serif;
	font-size: 15px;
}
.thead {
	height: 23px;
	background: #efefef;
	display: flex;
	line-height: 23px;
	border-bottom: 1px solid #d8d8d8;
}
.th {
	border-right: 1px solid #d8d8d8;
	padding-left: 5px;
}
.th-name {
	width: 248px;
	display: flex;
	align-items: center;
}
.sort {
	margin-left: 18px;
	width: 0;
	height: 0;
	border-left: 5px solid transparent;
	border-right: 5px solid transparent;
	border-bottom: 6px solid #222;
}
.th-cur {
	width: 30px;
	padding-left: 6px;
}
.th-note {
	width: 126px;
	padding-left: 7px;
}
.tbody {
	display: flex;
	height: 168px;
}
.rows {
	width: 594px;
	position: relative;
}
.tr {
	height: 24px;
	display: flex;
	border-bottom: 1px solid #e8e8e8;
	line-height: 23px;
	white-space: nowrap;
}
.tr:nth-child(even) {
	background: #f9f9f9;
}
.td-name {
	width: 248px;
	display: flex;
	align-items: center;
	border-right: 1px solid #e8e8e8;
}
.td-name span {
	padding-top: 2px;
}
.l1 { padding-left: 3px; }
.l2 { padding-left: 22px; }
.l3 { padding-left: 41px; }
.exp {
	width: 11px;
	height: 11px;
	margin-right: 4px;
	flex: none;
	border: 1px solid #ccc;
	background: #fff;
	font-size: 11px;
	line-height: 9px;
	text-align: center;
	color: #111;
}
.exp-none {
	border: none;
	background: none;
}
.chk {
	flex: none;
}
.node {
	flex: none;
	margin-right: 4px;
}
.td-name .qmark {
	width: 16px;
	text-align: center;
	color: #f2a640;
	font-size: 19px;
	flex: none;
	padding-top: 0;
}
.td {
	width: 30px;
	border-right: 1px solid #e8e8e8;
	display: flex;
	align-items: center;
	justify-content: center;
}
.td-ok {
	padding-right: 4px;
}
.td:last-child {
	width: 126px;
}
.tree-lines {
	position: absolute;
	left: 0;
	top: 0;
}
.vscroll {
	width: 20px;
	display: flex;
	flex-direction: column;
	align-items: center;
	background: #f4f4f4;
	padding: 7px 0 5px;
}
.thumb {
	width: 20px;
	height: 74px;
	margin-top: 5px;
	background: #cdcdcd;
}
.scroll-down {
	margin-top: auto;
}
.hscroll {
	height: 8px;
	margin-top: 2px;
	background: #dcdcdc;
	border: 1px solid #aaa;
}

/* 折叠段 */
.sec-head {
	display: flex;
	align-items: center;
	font-size: 18px;
	color: #0b7299;
	padding-left: 8px;
}
.sec-head span {
	line-height: 26px;
	padding-top: 2px;
}
.sec-search {
	height: 28px;
	padding-top: 4px;
}
.sec-rel-head {
	height: 32px;
	padding-bottom: 6px;
}
.sec-detail {
	height: 27px;
	padding-top: 3px;
}
.sec-preview-head {
	height: 33px;
	padding-bottom: 3px;
}
.tri-r, .tri-d {
	width: 19px;
	flex: none;
	position: relative;
}
.tri-r::before {
	content: "";
	display: block;
	margin-left: 2px;
	width: 0;
	height: 0;
	border-top: 6px solid transparent;
	border-bottom: 6px solid transparent;
	border-left: 6px solid #075f80;
}
.tri-d::before {
	content: "";
	display: block;
	margin-left: -1px;
	width: 0;
	height: 0;
	border-left: 6px solid transparent;
	border-right: 6px solid transparent;
	border-top: 6px solid #075f80;
}
.sec-bar {
	height: 3px;
	background: #d2d2d2;
}
.sec-bar-thin {
	height: 2px;
}
.sec-box {
	border: 1px solid #dcdcdc;
	border-top: none;
}
.sec-rel {
	height: 247px;
}
.sec-preview {
	height: 400px;
}
.rel-body {
	display: flex;
	padding-left: 3px;
}
.rel-list {
	width: 573px;
	height: 210px;
	border: 1px solid #dcdcdc;
	padding: 0 1px;
}
.rel-list i {
	display: block;
	height: 24px;
	border-bottom: 1px solid #e8e8e8;
}
.rel-list i:nth-child(even) {
	background: #f9f9f9;
}
.rel-list i:last-child {
	border-bottom: none;
}
.rel-btns {
	margin-left: 3px;
	display: flex;
	flex-direction: column;
	gap: 2px;
}
.rel-btn {
	width: 32px;
	height: 32px;
	border: 1px solid #d0d0d0;
	display: flex;
	align-items: center;
	justify-content: center;
}
.rel-btn-on {
	border-color: #777;
}
.preview-box {
	margin-left: 152px;
	width: 308px;
	height: 230px;
	border: 1px solid #dcdcdc;
	font-size: 15px;
	display: flex;
	align-items: center;
	justify-content: center;
	padding-bottom: 3px;
}
.splitter {
	width: 2px;
	flex: none;
	background: #d0d0d0;
}

/* 图纸区 */
.workspace {
	flex: 1;
	min-width: 0;
}
.doc-tabs {
	height: 30px;
	display: flex;
	font-family: Inter, "Noto Sans CJK SC", sans-serif;
	font-size: 15px;
	border-bottom: 2px solid #005f85;
	color: #222;
}
.doc-tab {
	display: flex;
	align-items: center;
	height: 28px;
	white-space: nowrap;
}
.dt-find {
	width: 105px;
	padding-left: 3px;
	gap: 6px;
}
.dt-file {
	width: 245px;
	padding: 0 20px 0 8px;
	gap: 4px;
	letter-spacing: -.16px;
}
.dt-active {
	width: 158px;
	padding: 0 6px 0 7px;
	gap: 4px;
	background: #005f85;
	color: #fff;
}
.dt-detach {
	margin-left: auto;
	color: #333;
}
.dt-active .dt-detach {
	color: #fff;
}
.dt-close {
	margin-left: 1px;
}
.sheet {
	display: block;
	background: #3c3c3c;
}
.obj {
	stroke: #f4f4f4;
	stroke-width: 6;
	stroke-linejoin: round;
}
.hid {
	stroke: #3d5a85;
	stroke-width: 3.500;
}
.hatch {
	stroke: #e8e820;
	stroke-width: 3.500;
}
.hatch-soft {
	stroke: #e0c040;
}
.center {
	stroke: #c02626;
	stroke-width: 5.500;
}
.dash {
	stroke-dasharray: 62 8 10 8;
}
.mark {
	stroke: #f79a3c;
	stroke-width: 5;
}
.dim {
	stroke: #18c8c8;
	stroke-width: 4;
}
.dim-arrow {
	fill: #00ffff;
	stroke: none;
}
.dim-text {
	fill: #22cc22;
	font-family: "Liberation Sans", sans-serif;
	font-style: italic;
}
.sheet-name {
	fill: #e8822e;
	font-size: 15px;
}
.watermark {
	fill: #c8c8c8;
	font-family: "Liberation Mono", monospace;
	font-size: 13.330px;
}
.wm-cn {
	font-family: "Noto Sans CJK SC", sans-serif;
	font-size: 16px;
	fill: #b8b8b8;
}
```
